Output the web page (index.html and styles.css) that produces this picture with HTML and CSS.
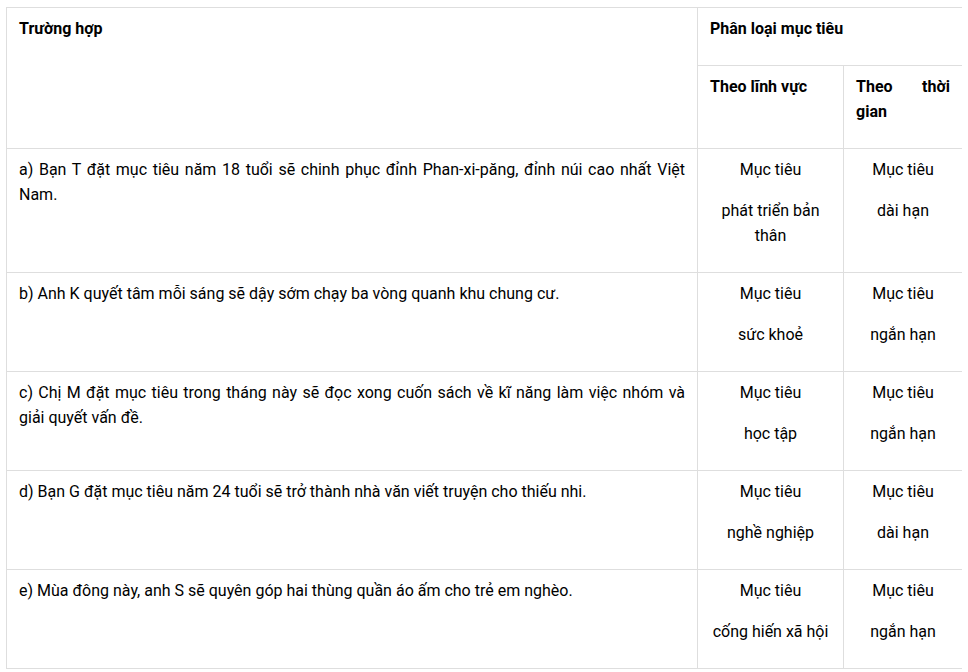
FILE: index.html
```html
<!DOCTYPE html>
<html lang="vi">
<head>
<meta charset="utf-8">
<link rel="stylesheet" href="styles.css">
</head>
<body>
<table class="goals">
  <colgroup>
    <col class="c1"><col class="c2"><col class="c3">
  </colgroup>
  <thead>
    <tr>
      <th rowspan="2"><p>Trường hợp</p></th>
      <th colspan="2"><p>Phân loại mục tiêu</p></th>
    </tr>
    <tr>
      <th><p>Theo lĩnh vực</p></th>
      <th><p>Theo thời gian</p></th>
    </tr>
  </thead>
  <tbody>
    <tr>
      <td><p>a) Bạn T đặt mục tiêu năm 18 tuổi sẽ chinh phục đỉnh Phan-xi-păng, đỉnh núi cao nhất Việt Nam.</p></td>
      <td class="center"><p>Mục tiêu</p><p>phát triển bản thân</p></td>
      <td class="center"><p>Mục tiêu</p><p>dài hạn</p></td>
    </tr>
    <tr>
      <td><p>b) Anh K quyết tâm mỗi sáng sẽ dậy sớm chạy ba vòng quanh khu chung cư.</p></td>
      <td class="center"><p>Mục tiêu</p><p>sức khoẻ</p></td>
      <td class="center"><p>Mục tiêu</p><p>ngắn hạn</p></td>
    </tr>
    <tr>
      <td><p>c) Chị M đặt mục tiêu trong tháng này sẽ đọc xong cuốn sách về kĩ năng làm việc nhóm và giải quyết vấn đề.</p></td>
      <td class="center"><p>Mục tiêu</p><p>học tập</p></td>
      <td class="center"><p>Mục tiêu</p><p>ngắn hạn</p></td>
    </tr>
    <tr>
      <td><p>d) Bạn G đặt mục tiêu năm 24 tuổi sẽ trở thành nhà văn viết truyện cho thiếu nhi.</p></td>
      <td class="center"><p>Mục tiêu</p><p>nghề nghiệp</p></td>
      <td class="center"><p>Mục tiêu</p><p>dài hạn</p></td>
    </tr>
    <tr>
      <td><p>e) Mùa đông này, anh S sẽ quyên góp hai thùng quần áo ấm cho trẻ em nghèo.</p></td>
      <td class="center"><p>Mục tiêu</p><p>cống hiến xã hội</p></td>
      <td class="center"><p>Mục tiêu</p><p>ngắn hạn</p></td>
    </tr>
  </tbody>
</table>
</body>
</html>
```
FILE: styles.css
```css
html, body {
  background: #fff;
}
body {
  margin: 7px 6px;
  font-family: Roboto, "Noto Sans", sans-serif;
  font-size: 16px;
  line-height: 25px;
  color: #000;
}
.goals {
  width: 956px;
  border-collapse: collapse;
  table-layout: fixed;
}
.c1 { width: 691px; }
.c2 { width: 146px; }
.c3 { width: 119px; }
.goals th,
.goals td {
  border: 1px solid #dedede;
  padding: 8px 12px;
  vertical-align: top;
  text-align: justify;
}
.goals th {
  font-weight: 700;
}
.goals p {
  margin: 0 0 16px;
}
.goals td.center {
  text-align: center;
}
```
